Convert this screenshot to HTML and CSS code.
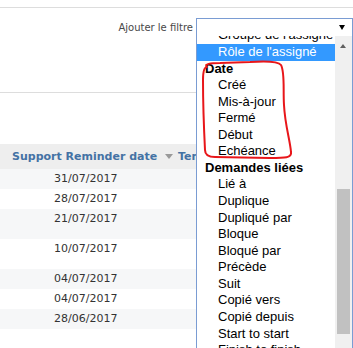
FILE: index.html
```html
<!DOCTYPE html>
<html lang="fr">
<head>
<meta charset="utf-8">
<title>Filtres</title>
<link rel="stylesheet" href="styles.css">
</head>
<body>
<div class="top-rule"></div>
<div class="filters">
  <label class="filter-label">Ajouter le filtre</label>
  <div class="select">
    <span class="select-arrow"></span>
    <div class="dropdown">
      <div class="opts">
        <div class="opts-inner">
          <div class="opt">Groupe de l'assigné</div>
          <div class="opt selected">Rôle de l'assigné</div>
          <div class="group">Date</div>
          <div class="opt">Créé</div>
          <div class="opt">Mis-à-jour</div>
          <div class="opt">Fermé</div>
          <div class="opt">Début</div>
          <div class="opt">Echéance</div>
          <div class="group">Demandes liées</div>
          <div class="opt">Lié à</div>
          <div class="opt">Duplique</div>
          <div class="opt">Dupliqué par</div>
          <div class="opt">Bloque</div>
          <div class="opt">Bloqué par</div>
          <div class="opt">Précède</div>
          <div class="opt">Suit</div>
          <div class="opt">Copié vers</div>
          <div class="opt">Copié depuis</div>
          <div class="opt">Start to start</div>
          <div class="opt">Finish to finish</div>
        </div>
      </div>
      <div class="scrollbar">
        <div class="sb-up"><span class="sb-arrow"></span></div>
        <div class="sb-thumb"></div>
      </div>
    </div>
  </div>
</div>
<div class="mid-rule"></div>
<table class="list">
  <colgroup><col class="c1"><col></colgroup>
  <thead>
    <tr><th class="h1">Support Reminder date <span class="sort"></span></th><th class="h2">Temps passé</th></tr>
  </thead>
  <tbody>
    <tr class="odd"><td class="d">31/07/2017</td><td></td></tr>
    <tr class="even"><td class="d">28/07/2017</td><td></td></tr>
    <tr class="odd tall"><td class="d">21/07/2017</td><td></td></tr>
    <tr class="even tall"><td class="d">10/07/2017</td><td></td></tr>
    <tr class="odd"><td class="d">04/07/2017</td><td></td></tr>
    <tr class="even"><td class="d">04/07/2017</td><td></td></tr>
    <tr class="odd"><td class="d">28/06/2017</td><td></td></tr>
    <tr class="even"><td class="d"></td><td></td></tr>
  </tbody>
</table>
<svg class="annotation" width="353" height="348" viewBox="0 0 353 348">
  <path d="M207 67 C204 64 210 63 220 63 L250 62 C265 61 278 61 281 65 C285 72 283 90 284 105 C285 125 290 140 291 152 C292 158 285 158 270 158 L215 157 C208 157 205 155 205 150 C204 130 203 100 203 80 C203 72 204 67 207 67" fill="none" stroke="#e8161a" stroke-width="2" stroke-linecap="round"/>
</svg>
</body>
</html>
```
FILE: styles.css
```css
html, body {
  margin: 0;
  padding: 0;
  background: #fff;
  overflow: hidden;
  width: 353px;
  height: 348px;
}
body {
  font-family: "DejaVu Sans", Verdana, sans-serif;
  color: #333;
  position: relative;
}
.top-rule {
  margin-top: 7px;
  border-top: 1px solid #dddddd;
}
.filters {
  margin-top: 10px;
  height: 19px;
  display: flex;
  justify-content: flex-end;
  align-items: center;
  gap: 3px;
}
.filter-label {
  font-size: 10px;
  color: #484848;
  line-height: 19px;
}
.select {
  position: relative;
  box-sizing: border-box;
  width: 157px;
  height: 19px;
  border: 1px solid #7a9cd3;
  background: #fff;
  display: flex;
  justify-content: flex-end;
  align-items: center;
  padding-right: 7px;
}
.select-arrow {
  width: 0;
  height: 0;
  border-left: 3px solid transparent;
  border-right: 3px solid transparent;
  border-top: 5px solid #000;
}
.dropdown {
  position: absolute;
  top: 17px;
  left: -1px;
  width: 157px;
  height: 330px;
  box-sizing: border-box;
  border: 1px solid #7a9cd3;
  border-top: none;
  background: #fff;
  display: flex;
  z-index: 5;
}
.opts {
  flex: 1;
  overflow: hidden;
  font-family: "Liberation Sans", Arial, sans-serif;
  font-size: 13px;
  color: #000;
}
.opts-inner {
  margin-top: -8.6px;
}
.opt, .group {
  height: 16.57px;
  line-height: 16.57px;
  white-space: nowrap;
}
.opt { padding-left: 21px; }
.group { padding-left: 8px; font-weight: bold; }
.opt.selected {
  background: #3399ff;
  color: #fff;
}
.scrollbar {
  width: 17px;
  background: #f0f0f0;
  display: flex;
  flex-direction: column;
  align-items: center;
}
.sb-up {
  height: 20px;
  width: 17px;
  display: flex;
  justify-content: center;
  align-items: center;
}
.sb-arrow {
  width: 0;
  height: 0;
  border-left: 3px solid transparent;
  border-right: 3px solid transparent;
  border-bottom: 4px solid #606060;
  margin-left: -1px;
}
.sb-thumb {
  margin-top: 133px;
  width: 13px;
  height: 145px;
  background: #c1c1c1;
}
.mid-rule {
  margin-top: 55px;
  border-top: 1px solid #dddddd;
}
.list {
  margin-top: 51px;
  width: 353px;
  border-collapse: collapse;
  table-layout: fixed;
  font-size: 11px;
}
.c1 { width: 174px; }
.list th {
  height: 25px;
  padding: 0;
  background: #eeeeee;
  color: #4472a4;
  font-weight: bold;
  text-align: left;
  white-space: nowrap;
  overflow: hidden;
}
.list .h1 { padding-left: 12px; }
.list .h2 { padding-left: 4px; }
.sort {
  display: inline-block;
  width: 0;
  height: 0;
  border-left: 4px solid transparent;
  border-right: 4px solid transparent;
  border-top: 5px solid #999;
  margin-left: 4px;
  vertical-align: 1px;
}
.list td {
  height: 14px;
  padding: 3px 4px;
  line-height: 14px;
  vertical-align: top;
  color: #333;
}
.list .d { padding-left: 54px; }
.list .tall td { height: 24px; }
.odd { background: #f6f7f8; }
.even { background: #fff; }
.annotation {
  position: absolute;
  left: 0;
  top: 0;
  pointer-events: none;
  z-index: 10;
}
```
